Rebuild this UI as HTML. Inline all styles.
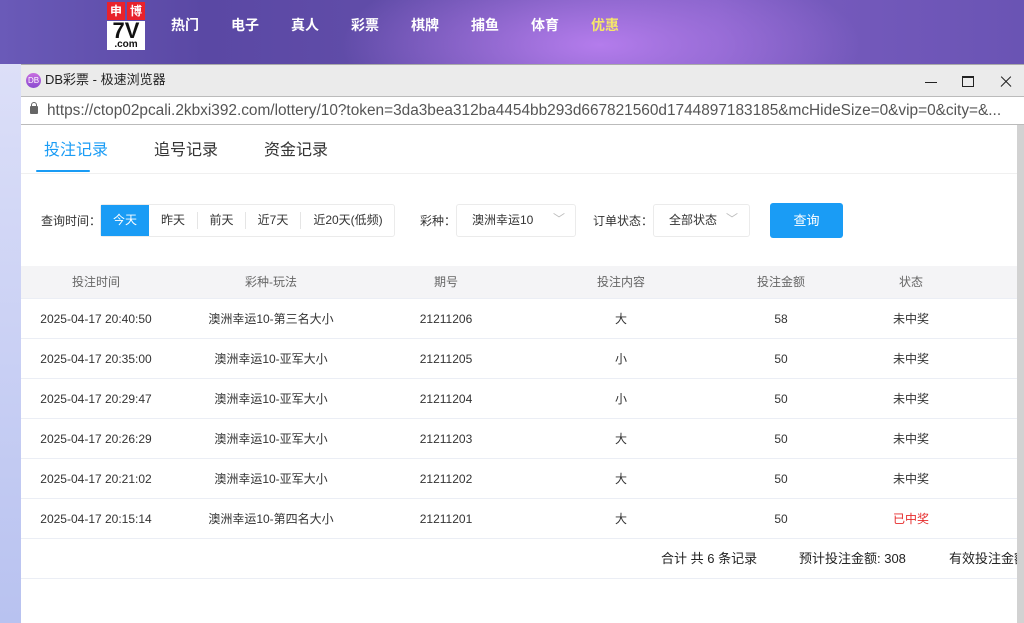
<!DOCTYPE html>
<html><head><meta charset="utf-8"><style>
*{margin:0;padding:0;box-sizing:border-box}
body{width:1024px;height:623px;overflow:hidden;position:relative;font-family:"Liberation Sans","Noto Sans CJK SC",sans-serif;background:#c5cbf3}
.abs{position:absolute}
#top{left:0;top:0;width:1024px;height:64px;background:radial-gradient(ellipse 260px 90px at 600px 45px,#b47cec 0%,rgba(160,110,225,0) 100%),linear-gradient(90deg,#6a5ab8 0%,#5a48a4 20%,#6650ac 50%,#7a5cc0 70%,#6a54b4 100%)}
.nav{top:16px;color:#fff;font-size:14px;font-weight:bold;line-height:18px}
#left{left:0;top:64px;width:21px;height:559px;background:linear-gradient(#dcdff8,#b8c2f0)}
#win{left:21px;top:64px;width:1003px;height:559px;background:#fff}
#title{left:0;top:0;width:1003px;height:32px;background:#ebebeb;border-top:1px solid #aaa}
#addr{left:0;top:32px;width:1003px;height:29px;background:#fff;border-top:1px solid #bbb;border-bottom:1px solid #bbb;font-size:15.4px;color:#555;padding-left:26px;line-height:27px;white-space:nowrap;overflow:hidden}
.c{position:absolute;text-align:center;font-size:12px;color:#333;line-height:16px;white-space:nowrap}
.l{position:absolute;font-size:12px;color:#333;line-height:16px;white-space:nowrap}
.row{position:absolute;left:0;width:996px;height:40px;border-bottom:1px solid #ebeef5}
</style></head><body>
<div id="top" class="abs"></div>
<div class="abs" style="left:107px;top:2px;width:38px;height:46px">
 <div class="abs" style="left:0;top:0;width:18px;height:18px;background:#e8222c;color:#fff;font-size:12px;text-align:center;line-height:18px;font-weight:bold">申</div>
 <div class="abs" style="left:20px;top:0;width:18px;height:18px;background:#e8222c;color:#fff;font-size:12px;text-align:center;line-height:18px;font-weight:bold">博</div>
 <div class="abs" style="left:0;top:19px;width:38px;height:20px;background:#fff;color:#111;font-size:22px;font-weight:bold;text-align:center;line-height:20px">7V</div>
 <div class="abs" style="left:0;top:38px;width:38px;height:10px;background:#fff;color:#111;font-size:10px;font-weight:bold;text-align:center;line-height:10px">.com</div>
</div>
<div class="abs nav" style="left:171px">热门</div>
<div class="abs nav" style="left:231px">电子</div>
<div class="abs nav" style="left:291px">真人</div>
<div class="abs nav" style="left:351px">彩票</div>
<div class="abs nav" style="left:411px">棋牌</div>
<div class="abs nav" style="left:471px">捕鱼</div>
<div class="abs nav" style="left:531px">体育</div>
<div class="abs nav" style="left:591px;color:#f5e66a">优惠</div>
<div id="left" class="abs"></div>
<div id="win" class="abs">
 <div id="title" class="abs">
  <div class="abs" style="left:5px;top:8px;width:15px;height:15px;border-radius:50%;background:linear-gradient(#c86ee0,#8a4ad0);color:#fff;font-size:8px;text-align:center;line-height:15px">DB</div>
  <div class="abs" style="left:24px;top:7px;font-size:13px;color:#222;line-height:16px">DB彩票 - 极速浏览器</div>
  <div class="abs" style="left:904px;top:17px;width:12px;height:1px;background:#222"></div>
  <div class="abs" style="left:941px;top:11px;width:12px;height:11px;border:1px solid #222;border-top-width:2px"></div>
  <div class="abs" style="left:978px;top:16px;width:14px;height:1.3px;background:#222;transform:rotate(45deg)"></div>
  <div class="abs" style="left:978px;top:16px;width:14px;height:1.3px;background:#222;transform:rotate(-45deg)"></div>
 </div>
 <div id="addr" class="abs"><span class="abs" style="left:9px;top:9px;width:8px;height:8px;background:#666;border-radius:1px"></span><span class="abs" style="left:10px;top:5px;width:6px;height:6px;border:1.5px solid #666;border-radius:3px 3px 0 0"></span>https://ctop02pcali.2kbxi392.com/lottery/10?token=3da3bea312ba4454bb293d667821560d1744897183185&amp;mcHideSize=0&amp;vip=0&amp;city=&amp;...</div>
 <div class="abs" style="left:996px;top:61px;width:7px;height:498px;background:#d2d2d2"></div>
 <div class="abs" style="left:0;top:61px;width:996px;height:498px">
  <div class="abs" style="left:23px;top:16px;font-size:16px;color:#1a9cf5;line-height:20px">投注记录</div>
  <div class="abs" style="left:133px;top:16px;font-size:16px;color:#333;line-height:20px">追号记录</div>
  <div class="abs" style="left:243px;top:16px;font-size:16px;color:#333;line-height:20px">资金记录</div>
  <div class="abs" style="left:15px;top:45px;width:54px;height:2px;background:#1a9cf5;border-radius:1px"></div>
  <div class="abs" style="left:0;top:48px;width:996px;height:1px;background:#f0f0f0"></div>
  <div class="l" style="left:20px;top:88px">查询时间：</div>
  <div class="abs" style="left:79px;top:79px;width:295px;height:33px;border:1px solid #ebebeb;border-radius:3px;font-size:12px;color:#333">
   <div class="abs" style="left:0;top:0;width:48px;height:31px;background:#1a9cf5;color:#fff;text-align:center;line-height:31px">今天</div>
   <div class="abs" style="left:48px;top:7px;width:48px;text-align:center;line-height:17px">昨天</div>
   <div class="abs" style="left:96px;top:7px;width:48px;text-align:center;line-height:17px;border-left:1px solid #e5e5e5">前天</div>
   <div class="abs" style="left:144px;top:7px;width:55px;text-align:center;line-height:17px;border-left:1px solid #e5e5e5">近7天</div>
   <div class="abs" style="left:199px;top:7px;width:95px;text-align:center;line-height:17px;border-left:1px solid #e5e5e5">近20天(低频)</div>
  </div>
  <div class="l" style="left:399px;top:88px">彩种：</div>
  <div class="abs" style="left:435px;top:79px;width:120px;height:33px;border:1px solid #ebebeb;border-radius:3px;font-size:12px;color:#333;line-height:31px;padding-left:15px">澳洲幸运10<span class="abs" style="left:96px;top:-1px;color:#bbb">﹀</span></div>
  <div class="l" style="left:572px;top:88px">订单状态：</div>
  <div class="abs" style="left:632px;top:79px;width:97px;height:33px;border:1px solid #ebebeb;border-radius:3px;font-size:12px;color:#333;line-height:31px;padding-left:15px">全部状态<span class="abs" style="left:72px;top:-1px;color:#bbb">﹀</span></div>
  <div class="abs" style="left:749px;top:78px;width:73px;height:35px;background:#1a9cf5;border-radius:3px;color:#fff;font-size:13px;text-align:center;line-height:35px">查询</div>
  <div class="abs" style="left:0;top:141px;width:996px;height:33px;background:#f4f4f6;border-bottom:1px solid #ebeef5">
   <div class="c" style="left:15px;width:120px;top:8px;color:#666">投注时间</div>
   <div class="c" style="left:190px;width:120px;top:8px;color:#666">彩种-玩法</div>
   <div class="c" style="left:365px;width:120px;top:8px;color:#666">期号</div>
   <div class="c" style="left:540px;width:120px;top:8px;color:#666">投注内容</div>
   <div class="c" style="left:700px;width:120px;top:8px;color:#666">投注金额</div>
   <div class="c" style="left:830px;width:120px;top:8px;color:#666">状态</div>
  </div>
 </div>
</div>
<div class="abs" style="left:21px;top:299px">
 <div class="row" style="top:0"><div class="c" style="left:15px;width:120px;top:12px">2025-04-17 20:40:50</div><div class="c" style="left:180px;width:140px;top:12px">澳洲幸运10-第三名大小</div><div class="c" style="left:365px;width:120px;top:12px">21211206</div><div class="c" style="left:540px;width:120px;top:12px">大</div><div class="c" style="left:700px;width:120px;top:12px">58</div><div class="c" style="left:830px;width:120px;top:12px">未中奖</div></div>
 <div class="row" style="top:40px"><div class="c" style="left:15px;width:120px;top:12px">2025-04-17 20:35:00</div><div class="c" style="left:180px;width:140px;top:12px">澳洲幸运10-亚军大小</div><div class="c" style="left:365px;width:120px;top:12px">21211205</div><div class="c" style="left:540px;width:120px;top:12px">小</div><div class="c" style="left:700px;width:120px;top:12px">50</div><div class="c" style="left:830px;width:120px;top:12px">未中奖</div></div>
 <div class="row" style="top:80px"><div class="c" style="left:15px;width:120px;top:12px">2025-04-17 20:29:47</div><div class="c" style="left:180px;width:140px;top:12px">澳洲幸运10-亚军大小</div><div class="c" style="left:365px;width:120px;top:12px">21211204</div><div class="c" style="left:540px;width:120px;top:12px">小</div><div class="c" style="left:700px;width:120px;top:12px">50</div><div class="c" style="left:830px;width:120px;top:12px">未中奖</div></div>
 <div class="row" style="top:120px"><div class="c" style="left:15px;width:120px;top:12px">2025-04-17 20:26:29</div><div class="c" style="left:180px;width:140px;top:12px">澳洲幸运10-亚军大小</div><div class="c" style="left:365px;width:120px;top:12px">21211203</div><div class="c" style="left:540px;width:120px;top:12px">大</div><div class="c" style="left:700px;width:120px;top:12px">50</div><div class="c" style="left:830px;width:120px;top:12px">未中奖</div></div>
 <div class="row" style="top:160px"><div class="c" style="left:15px;width:120px;top:12px">2025-04-17 20:21:02</div><div class="c" style="left:180px;width:140px;top:12px">澳洲幸运10-亚军大小</div><div class="c" style="left:365px;width:120px;top:12px">21211202</div><div class="c" style="left:540px;width:120px;top:12px">大</div><div class="c" style="left:700px;width:120px;top:12px">50</div><div class="c" style="left:830px;width:120px;top:12px">未中奖</div></div>
 <div class="row" style="top:200px"><div class="c" style="left:15px;width:120px;top:12px">2025-04-17 20:15:14</div><div class="c" style="left:180px;width:140px;top:12px">澳洲幸运10-第四名大小</div><div class="c" style="left:365px;width:120px;top:12px">21211201</div><div class="c" style="left:540px;width:120px;top:12px">大</div><div class="c" style="left:700px;width:120px;top:12px">50</div><div class="c" style="left:830px;width:120px;top:12px;color:#e62b2b">已中奖</div></div>
 <div class="row" style="top:240px"><div class="abs" style="left:640px;top:11px;font-size:13px;color:#222;white-space:nowrap;line-height:18px">合计 共 6 条记录</div><div class="abs" style="left:778px;top:11px;font-size:13px;color:#222;white-space:nowrap;line-height:18px">预计投注金额: 308</div><div class="abs" style="left:928px;top:11px;font-size:13px;color:#222;white-space:nowrap;width:68px;overflow:hidden;line-height:18px">有效投注金额</div></div>
</div>
</body></html>
